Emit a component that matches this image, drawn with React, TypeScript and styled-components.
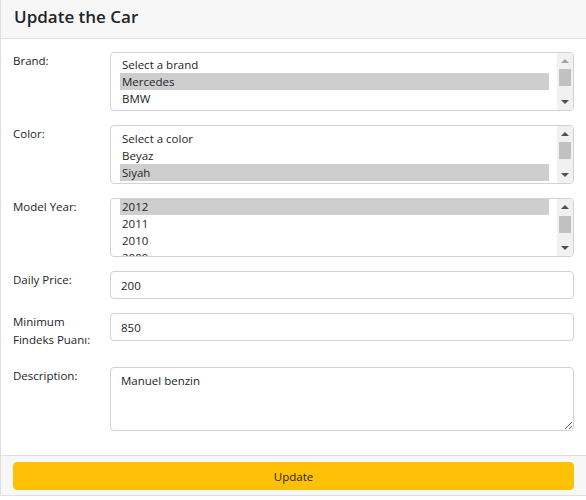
import React from "react";
import styled, { createGlobalStyle } from "styled-components";

const Global = createGlobalStyle`
  html, body { margin: 0; padding: 0; background: #fff; }
  body { font-family: "Open Sans", "Noto Sans", sans-serif; color: #212529; }
  * { box-sizing: border-box; }
`;

const FONT = `"Open Sans", "Noto Sans", sans-serif`;

const Card = styled.div`
  width: 586px;
  border: 1px solid #dfdfdf;
  border-top: none;
  border-right: none;
  background: #fff;
`;

const Header = styled.div`
  height: 39px;
  background: #f7f7f7;
  border-bottom: 1px solid #dfdfdf;
  padding: 5px 13px 0;
`;

const Title = styled.h5`
  margin: 0;
  font-size: 17px;
  font-weight: 600;
  line-height: 24px;
  color: #212529;
`;

const Body = styled.form`
  padding: 13px 12px 24px;
  display: flex;
  flex-direction: column;
  gap: 14px;
`;

const Row = styled.div`
  display: grid;
  grid-template-columns: 97px 1fr;
  align-items: start;
`;

const Label = styled.label`
  font-size: 11.5px;
  line-height: 18px;
  margin-bottom: 4px;
  color: #212529;
`;

const fieldBase = `
  width: 100%;
  font-family: ${FONT};
  font-size: 11.5px;
  color: #212529;
  background: #fff;
  border: 1px solid #ced4da;
  border-radius: 4px;
  outline: none;
`;

/* ---- list box ---- */
const ListFrame = styled.div`
  ${fieldBase}
  height: 59px;
  display: flex;
  overflow: hidden;
`;

const ListViewport = styled.div`
  flex: 1;
  overflow: hidden;
  padding: 3px 8px 0 9px;
`;

const OptionList = styled.div<{ $offset: number }>`
  transform: translateY(${(p) => -p.$offset}px);
`;

const Option = styled.div<{ $selected?: boolean }>`
  height: 17px;
  line-height: 17px;
  padding: 0 2px;
  white-space: nowrap;
  background: ${(p) => (p.$selected ? "#cecece" : "transparent")};
`;

const ScrollBar = styled.div`
  width: 16px;
  background: #f1f1f1;
  display: flex;
  flex-direction: column;
`;

const ArrowButton = styled.div`
  height: 16px;
  display: flex;
  align-items: center;
  justify-content: center;
`;

const Arrow = styled.span<{ $dir: "up" | "down"; $disabled?: boolean }>`
  width: 0;
  height: 0;
  border-left: 4px solid transparent;
  border-right: 4px solid transparent;
  ${(p) =>
    p.$dir === "up"
      ? `border-bottom: 4px solid ${p.$disabled ? "#a3a3a3" : "#505050"};`
      : `border-top: 4px solid ${p.$disabled ? "#a3a3a3" : "#505050"};`}
`;

const Track = styled.div`
  flex: 1;
  padding: 0 2px;
`;

const Thumb = styled.div<{ $top: number }>`
  margin-top: ${(p) => p.$top}px;
  height: 17px;
  background: #c1c1c1;
`;

type ListProps = {
  options: string[];
  selected: string;
  offset?: number;
  thumbTop?: number;
};

function ListBox({ options, selected, offset = 0, thumbTop = 0 }: ListProps) {
  return (
    <ListFrame role="listbox">
      <ListViewport>
        <OptionList $offset={offset}>
          {options.map((o) => (
            <Option key={o} role="option" aria-selected={o === selected} $selected={o === selected}>
              {o}
            </Option>
          ))}
        </OptionList>
      </ListViewport>
      <ScrollBar>
        <ArrowButton>
          <Arrow $dir="up" $disabled={offset === 0} />
        </ArrowButton>
        <Track>
          <Thumb $top={thumbTop} />
        </Track>
        <ArrowButton>
          <Arrow $dir="down" />
        </ArrowButton>
      </ScrollBar>
    </ListFrame>
  );
}

const TextInput = styled.input`
  ${fieldBase}
  height: 28px;
  padding: 4px 10px;
  line-height: 18px;
`;

const TextArea = styled.textarea`
  ${fieldBase}
  height: 64px;
  padding: 4px 10px;
  line-height: 18px;
  resize: vertical;
`;

const Footer = styled.div`
  background: #f7f7f7;
  border-top: 1px solid #dfdfdf;
  padding: 6px 12px 5px;
`;

const Button = styled.button`
  width: 100%;
  height: 28px;
  border: 1px solid #ffc107;
  background: #ffc107;
  color: #212529;
  border-radius: 4px;
  font-family: ${FONT};
  font-size: 11.5px;
  cursor: pointer;
`;

export default function App() {
  return (
    <>
      <Global />
      <Card>
        <Header>
          <Title>Update the Car</Title>
        </Header>
        <Body onSubmit={(e) => e.preventDefault()}>
          <Row>
            <Label>Brand:</Label>
            <ListBox options={["Select a brand", "Mercedes", "BMW"]} selected="Mercedes" />
          </Row>
          <Row>
            <Label>Color:</Label>
            <ListBox options={["Select a color", "Beyaz", "Siyah", "Mavi"]} selected="Siyah" offset={-1} />
          </Row>
          <Row>
            <Label>Model Year:</Label>
            <ListBox
              options={["2012", "2011", "2010", "2009"]}
              selected="2012"
              offset={4}
              thumbTop={1}
            />
          </Row>
          <Row>
            <Label>Daily Price:</Label>
            <TextInput defaultValue="200" />
          </Row>
          <Row>
            <Label>
              Minimum
              <br />
              Findeks Puanı:
            </Label>
            <TextInput defaultValue="850" />
          </Row>
          <Row>
            <Label>Description:</Label>
            <TextArea defaultValue="Manuel benzin" />
          </Row>
        </Body>
        <Footer>
          <Button type="button">Update</Button>
        </Footer>
      </Card>
    </>
  );
}
